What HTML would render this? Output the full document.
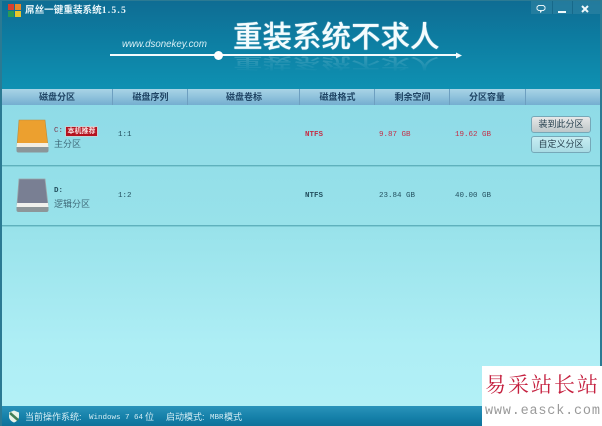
<!DOCTYPE html>
<html lang="zh">
<head>
<meta charset="utf-8">
<title>屌丝一键重装系统</title>
<style>
html,body{margin:0;padding:0}
body{width:602px;height:426px;overflow:hidden;position:relative;font-family:"Liberation Sans","Noto Sans CJK SC",sans-serif;background:#a5e8f0}
.a{position:absolute;white-space:nowrap}
.head{left:0;top:0;width:602px;height:89px;background:linear-gradient(180deg,#0e6c93 0%,#0d7fa3 50%,#0f91b2 100%)}
.bar{left:0;top:89px;width:602px;height:16px;background:linear-gradient(180deg,#a9d4e6 0%,#8fc2dc 50%,#74aed0 100%)}
.main{left:0;top:105px;width:602px;height:301px;background:linear-gradient(180deg,#8fdbe7 0%,#98e2ea 40%,#aeeef5 80%,#b2f0f6 100%)}
.foot{left:0;top:406px;width:602px;height:20px;background:linear-gradient(180deg,#2a93ba 0%,#147fa8 60%,#0f7199 100%)}
.edge{left:0;top:0;width:602px;height:426px;box-sizing:border-box;border:2px solid #2b7a93;border-bottom:0;border-top-width:1px}
.sep{top:89px;width:1px;height:16px;background:#6d9fc0}
.th{top:90px;height:14px;line-height:14px;font-size:9px;color:#1f4464;text-align:center;width:70px;font-weight:700}
.line{left:2px;width:598px;height:1px;background:#5fb1bd;box-shadow:0 1px 0 #7fcdd6}
.m{font-family:"Liberation Mono","Noto Sans CJK SC",monospace;font-size:7.500px;line-height:10px;color:#24505f}
.n{font-weight:700;font-size:7.500px}
.red{color:#c42f47}
.cn{font-size:9px;line-height:12px;color:#3f6a79}
.btn{left:531px;width:60px;height:17px;box-sizing:border-box;border:1px solid #76a8b8;border-radius:3px;font-size:9px;line-height:15px;text-align:center;color:#253f4d}
.slogan{left:233px;font-size:29.500px;line-height:34px;font-weight:500;font-family:"Noto Sans CJK SC",sans-serif;color:#f4fcfe}
.ft{top:411px;font-size:9px;line-height:12px;color:#d5eef5}
.fm{top:412px;font-size:7.500px;line-height:12px;color:#d5eef5;font-family:'Liberation Mono',monospace}
</style>
</head>
<body>
<div class="a head"></div>
<div class="a bar"></div>
<div class="a main"></div>
<div class="a foot"></div>

<!-- app logo -->
<svg class="a" style="left:8px;top:4px" width="13" height="13" viewBox="0 0 13 13">
<rect x="0" y="0" width="6" height="6" fill="#d8402e"/><rect x="7" y="0" width="6" height="6" fill="#e7872a"/>
<rect x="0" y="7" width="6" height="6" fill="#2b9a54"/><rect x="7" y="7" width="6" height="6" fill="#e8c62c"/>
</svg>
<div class="a" style="left:25px;top:4px;font-size:9.600px;line-height:14px;font-weight:700;color:#eaf6fa;font-family:'Liberation Serif','Noto Sans CJK SC',serif">屌丝一键重装系统<span style="letter-spacing:1.200px">1.5.5</span></div>

<!-- window buttons -->
<div class="a" style="left:531px;top:1px;width:69px;height:13px;background:#3d8ca9;opacity:.45"></div>
<div class="a" style="left:552px;top:1px;width:1px;height:13px;background:#17698a"></div>
<div class="a" style="left:572px;top:1px;width:1px;height:13px;background:#17698a"></div>
<svg class="a" style="left:531px;top:1px" width="70" height="15" viewBox="0 0 70 15">
<path d="M7.500 4.500h5l1.500 1.500v2l-1.500 1.500h-2l-1 2v-2h-2l-1.500-1.500v-2z" fill="none" stroke="#e5f2f6" stroke-width="1"/>
<rect x="27" y="10" width="8" height="2" fill="#eef8fb"/>
<path d="M51 5l6 6M57 5l-6 6" stroke="#eef8fb" stroke-width="2"/>
</svg>

<!-- banner -->
<div class="a" style="left:122px;top:38px;font-size:9.700px;line-height:13px;font-style:italic;color:#d9f0f6">www.dsonekey.com</div>
<div class="a slogan" style="top:18px;text-shadow:0 0 1px #fff">重装系统不求人</div>
<div class="a slogan" style="top:47px;transform:scaleY(-.5);transform-origin:50% 50%;opacity:.2;-webkit-mask-image:linear-gradient(0deg,#000,transparent)">重装系统不求人</div>
<div class="a" style="left:110px;top:54px;width:348px;height:2px;background:#f3fbfd"></div>
<div class="a" style="left:214px;top:51px;width:9px;height:9px;border-radius:50%;background:#fff"></div>
<svg class="a" style="left:456px;top:52px" width="6" height="7" viewBox="0 0 6 7"><path d="M0 0.500l6 3-6 3z" fill="#f3fbfd"/></svg>

<!-- table header -->
<div class="a sep" style="left:112px"></div>
<div class="a sep" style="left:187px"></div>
<div class="a sep" style="left:299px"></div>
<div class="a sep" style="left:374px"></div>
<div class="a sep" style="left:449px"></div>
<div class="a sep" style="left:525px"></div>
<div class="a th" style="left:22px">磁盘分区</div>
<div class="a th" style="left:115.500px">磁盘序列</div>
<div class="a th" style="left:209px">磁盘卷标</div>
<div class="a th" style="left:302.500px">磁盘格式</div>
<div class="a th" style="left:377.500px">剩余空间</div>
<div class="a th" style="left:452px">分区容量</div>

<!-- row 1 -->
<svg class="a" style="left:16px;top:119px" width="33" height="35" viewBox="0 0 33 35">
<path d="M3 1h26l3 26H1z" fill="#eca02f" stroke="#b98c3e" stroke-width=".6"/>
<path d="M1 24h31l.5 5H.5z" fill="#f3eee2"/>
<path d="M.5 28h32v3.500a2 2 0 0 1-2 2h-28a2 2 0 0 1-2-2z" fill="#8b9699"/>
</svg>
<div class="a m" style="left:54px;top:126px;color:#7a3348">C:</div>
<div class="a" style="left:65px;top:126px;width:33px;height:11px;box-sizing:border-box;border:1px solid #c2d3d6;background:#b5121e;color:#f7e3e3;font-size:7px;line-height:9px;text-align:center;font-weight:700">本机推荐</div>
<div class="a cn" style="left:54px;top:138px">主分区</div>
<div class="a m" style="left:118px;top:130px">1:1</div>
<div class="a m red n" style="left:305px;top:130px">NTFS</div>
<div class="a m red" style="left:379px;top:130px">9.87 GB</div>
<div class="a m red" style="left:455px;top:130px">19.62 GB</div>
<div class="a btn" style="top:116px;background:linear-gradient(180deg,#e7e8e8,#bfc7c9)">装到此分区</div>
<div class="a btn" style="top:136px;background:linear-gradient(180deg,#c8edf2,#a8dbe4)">自定义分区</div>
<div class="a line" style="top:165px"></div>

<!-- row 2 -->
<svg class="a" style="left:16px;top:178px" width="33" height="35" viewBox="0 0 33 35">
<path d="M3 1h26l3 26H1z" fill="#797f93" stroke="#9aa3a8" stroke-width=".8"/>
<path d="M1 25h31l.5 5H.5z" fill="#f0f0ec"/>
<path d="M.5 29h32v3a2 2 0 0 1-2 2h-28a2 2 0 0 1-2-2z" fill="#8d9699"/>
</svg>
<div class="a m" style="left:54px;top:186px;font-weight:700">D:</div>
<div class="a cn" style="left:54px;top:198px">逻辑分区</div>
<div class="a m" style="left:118px;top:191px">1:2</div>
<div class="a m n" style="left:305px;top:191px">NTFS</div>
<div class="a m" style="left:379px;top:191px">23.84 GB</div>
<div class="a m" style="left:455px;top:191px">40.00 GB</div>
<div class="a line" style="top:225px"></div>

<!-- footer -->
<svg class="a" style="left:8px;top:410px" width="12" height="13" viewBox="0 0 12 13">
<path d="M1 2.500L6 .5l5 2v4c0 3-2.500 5-5 6-2.500-1-5-3-5-6z" fill="#e8f3e8"/>
<path d="M2 3l8 7" stroke="#3f7f56" stroke-width="2.500"/>
</svg>
<div class="a ft" style="left:25px">当前操作系统:</div>
<div class="a fm" style="left:89px">Windows 7 64</div>
<div class="a ft" style="left:145px">位</div>
<div class="a ft" style="left:166px">启动模式:</div>
<div class="a fm" style="left:210px">MBR</div>
<div class="a ft" style="left:224px">模式</div>

<div class="a edge"></div>

<!-- watermark -->
<div class="a" style="left:482px;top:366px;width:120px;height:60px;background:#fff"></div>
<div class="a" style="left:485px;top:370px;font-size:21px;line-height:28px;letter-spacing:2px;color:#c5203f;font-family:'Noto Serif CJK SC',serif">易采站长站</div>
<div class="a" style="left:485px;top:404px;font-size:13.500px;line-height:16px;letter-spacing:.8px;color:#9a9a9a;font-family:'Liberation Mono',monospace">www.easck.com</div>
</body>
</html>
